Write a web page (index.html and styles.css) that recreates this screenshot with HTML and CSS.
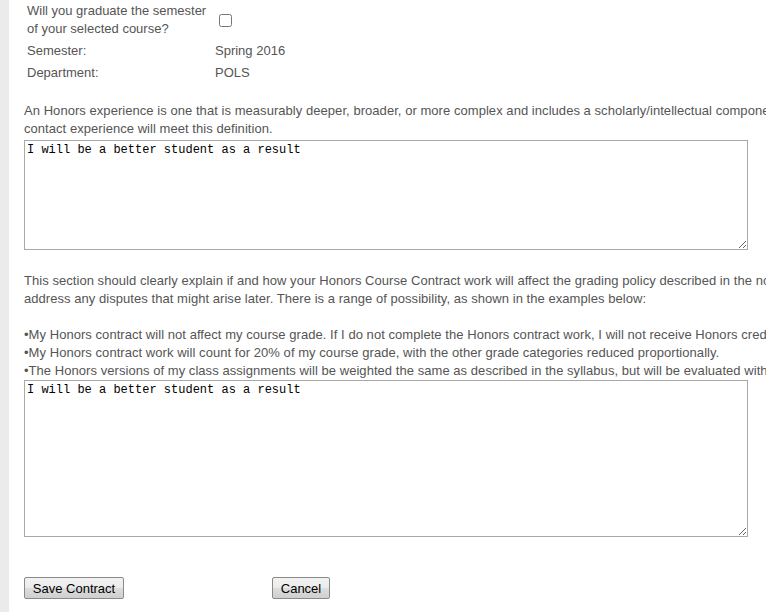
FILE: index.html
```html
<!DOCTYPE html>
<html>
<head>
<meta charset="utf-8">
<title>Honors Contract</title>
<link rel="stylesheet" href="styles.css">
</head>
<body>
<div class="page">
  <div class="strip"></div>
  <main class="main">
    <table class="info">
      <tr>
        <td class="label">Will you graduate the semester<br>of your selected course?</td>
        <td class="value"><input type="checkbox" class="check"></td>
      </tr>
      <tr>
        <td class="label">Semester:</td>
        <td class="value">Spring 2016</td>
      </tr>
      <tr>
        <td class="label">Department:</td>
        <td class="value">POLS</td>
      </tr>
    </table>

    <p class="para para-first">An Honors experience is one that is measurably deeper, broader, or more complex and includes a scholarly/intellectual component.<br>contact experience will meet this definition.</p>
    <textarea class="box box-one">I will be a better student as a result</textarea>

    <p class="para para-second">This section should clearly explain if and how your Honors Course Contract work will affect the grading policy described in the non-Honors syllabus.<br>address any disputes that might arise later. There is a range of possibility, as shown in the examples below:<br><br>•My Honors contract will not affect my course grade. If I do not complete the Honors contract work, I will not receive Honors credit.<br>•My Honors contract work will count for 20% of my course grade, with the other grade categories reduced proportionally.<br>•The Honors versions of my class assignments will be weighted the same as described in the syllabus, but will be evaluated with</p>
    <textarea class="box box-two">I will be a better student as a result</textarea>

    <div class="actions">
      <button class="btn btn-save" type="button">Save Contract</button>
      <button class="btn btn-cancel" type="button">Cancel</button>
    </div>
  </main>
</div>
</body>
</html>
```

FILE: styles.css
```css
html, body {
  margin: 0;
  padding: 0;
  background: #ffffff;
  overflow: hidden;
  width: 766px;
  height: 612px;
}

.page {
  display: flex;
  min-height: 612px;
}

.strip {
  flex: 0 0 9px;
  background: #ebebeb;
}

.main {
  flex: 0 0 1100px;
  padding-left: 15px;
  font-family: "Liberation Sans", Arial, sans-serif;
  font-size: 13px;
  color: #555555;
}

.info {
  border-collapse: collapse;
  border-spacing: 0;
}

.info td {
  padding: 2px 3px;
  line-height: 18px;
  vertical-align: middle;
}

.label {
  width: 182px;
  white-space: nowrap;
}

.check {
  margin: 3px 3px 3px 4px;
  width: 13px;
  height: 13px;
  vertical-align: middle;
}

.para {
  margin: 0;
  line-height: 18px;
  white-space: nowrap;
  letter-spacing: 0.05px;
}

.para-first {
  margin-top: 18px;
}

.para-second {
  margin-top: 22px;
}

.box {
  display: block;
  box-sizing: border-box;
  width: 724px;
  margin: 0;
  padding: 2px 2px;
  border: 1px solid #a9a9a9;
  font-family: "Liberation Mono", "Courier New", monospace;
  font-size: 12px;
  line-height: 15px;
  color: #000000;
  resize: both;
}

.box-one {
  height: 110px;
  margin-top: 2px;
}

.box-two {
  height: 157px;
  margin-top: 0;
}

.actions {
  display: flex;
  margin-top: 40px;
}

.btn {
  font-family: "Liberation Sans", Arial, sans-serif;
  font-size: 13px;
  color: #000000;
  height: 22px;
  padding: 0 7px;
  border: 1px solid #8a8a8a;
  border-radius: 2px;
  background: linear-gradient(#f2f2f2, #ebebeb 50%, #dddddd 51%, #cfcfcf);
}

.btn-save {
  width: 100px;
}

.btn-cancel {
  width: 58px;
  margin-left: 148px;
}
```
